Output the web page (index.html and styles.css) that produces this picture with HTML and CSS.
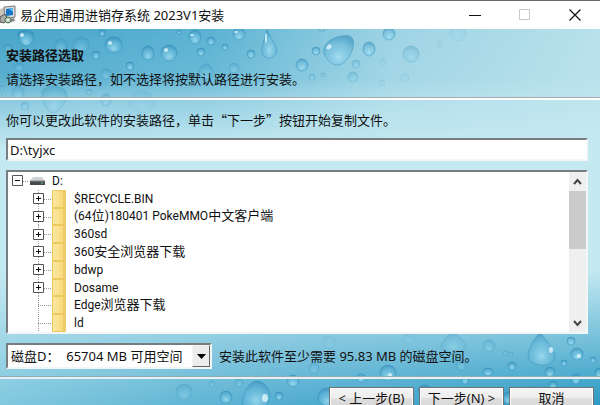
FILE: index.html
```
<!DOCTYPE html>
<html lang="zh-CN">
<head>
    <meta charset="UTF-8">
    <meta name="viewport" content="width=device-width, initial-scale=1.0">
    <title>易企用通用进销存系统 2023V1安装</title>
    <link rel="stylesheet" href="styles.css">
</head>
<body>
    <div class="window">
        <header class="titlebar">
            <svg class="app-icon" width="17" height="20" viewBox="0 0 17 20">
                <path d="M0 4l4-1v11l-4 2z" fill="#c9c5bb"/>
                <path d="M4 2l11-1v11l-10 2z" fill="#d8dde0" stroke="#777" stroke-width="1"/>
                <path d="M6 4l7-1v7l-7 1z" fill="#1677c8"/>
                <path d="M9 4l4-1v4z" fill="#5fb9ee"/>
                <path d="M5 15l9-2 1 3-8 2z" fill="#85888b"/>
                <path d="M0 12l5-3 3 5-4 4-4-1z" fill="#a9aaa3" stroke="#555" stroke-width="1"/>
                <circle cx="8" cy="15" r="3" fill="#b8ccb5" stroke="#497357"/>
                <circle cx="8" cy="15" r="1" fill="#fff"/>
            </svg>
            <h1>易企用通用进销存系统 2023V1安装</h1>
            <div class="window-buttons">
                <button type="button" aria-label="最小化"><svg width="12" height="12" viewBox="0 0 12 12"><path d="M0 6.5h12" stroke="#111"/></svg></button>
                <button type="button" aria-label="最大化" disabled><svg width="12" height="12" viewBox="0 0 12 12"><path d="M.5 .5h10v10h-10z" fill="none" stroke="#c8c8c8"/></svg></button>
                <button type="button" aria-label="关闭"><svg width="12" height="12" viewBox="0 0 12 12"><path d="M.5 .5l11 11M11.5 .5l-11 11" stroke="#111" stroke-width="1.2"/></svg></button>
            </div>
        </header>

        <main class="wizard">
            <!-- water drops, upper left -->
            <svg class="drops drops-top" width="600" height="100" viewBox="0 0 600 100" aria-hidden="true">
                <defs>
                    <radialGradient id="drop" cx=".5" cy=".72" r=".7">
                        <stop offset="0" stop-color="#a9e3f5" stop-opacity=".75"/>
                        <stop offset=".6" stop-color="#68b9dc" stop-opacity=".5"/>
                        <stop offset="1" stop-color="#2583b4" stop-opacity=".5"/>
                    </radialGradient>
                </defs>
                <g class="drop">
                    <path d="M18 4c3-4 15-3 16 2 0 5-4 11-8 11s-9-9-8-13z"/>
                    <path d="M106 12c4-6 15-5 16 2 1 6-5 11-10 9-5-1-9-7-6-11z"/>
                    <ellipse cx="102" cy="4" rx="3" ry="3"/>
                    <ellipse cx="148" cy="24" rx="6" ry="7"/>
                    <ellipse cx="169" cy="24" rx="8" ry="8"/>
                    <ellipse cx="195" cy="8" rx="6" ry="7"/>
                    <ellipse cx="211" cy="12" rx="4" ry="4"/>
                    <ellipse cx="179" cy="3" rx="2" ry="2"/>
                    <ellipse cx="201" cy="23" rx="4" ry="4"/>
                    <ellipse cx="225" cy="18" rx="3" ry="3"/>
                    <ellipse cx="239" cy="5" rx="6" ry="6"/>
                    <path d="M267 1c2 5 9 15 10 20 0 4-4 8-8 8-5 0-8-4-7-9 1-6 3-14 5-19z"/>
                    <ellipse cx="251" cy="25" rx="4" ry="4"/>
                    <path d="M325 17c4-8 20-13 26-9 5 4 2 15-3 21-5 8-13 9-18 4-4-4-9-10-5-16z"/>
                    <ellipse cx="316" cy="22" rx="4" ry="4"/>
                    <ellipse cx="322" cy="0" rx="3" ry="2"/>
                    <ellipse cx="302" cy="36" rx="6" ry="6"/>
                    <ellipse cx="96" cy="26" rx="4" ry="4"/>
                    <ellipse cx="130" cy="37" rx="4" ry="4"/>
                    <ellipse cx="389" cy="5" rx="6" ry="6"/>
                    <ellipse cx="369" cy="20" rx="6" ry="7"/>
                </g>
                <g class="drop soft">
                    <ellipse cx="61" cy="17" rx="6" ry="7"/>
                    <ellipse cx="81" cy="16" rx="8" ry="8"/>
                    <ellipse cx="8" cy="19" rx="4" ry="4"/>
                    <ellipse cx="19" cy="38" rx="5" ry="4"/>
                    <ellipse cx="43" cy="32" rx="3" ry="3"/>
                    <ellipse cx="18" cy="64" rx="6" ry="7"/>
                    <ellipse cx="2" cy="59" rx="2" ry="3"/>
                    <path d="M42 62c5-8 22-6 25 2 1 7-8 20-14 20s-14-16-11-22z"/>
                    <ellipse cx="89" cy="63" rx="3" ry="3"/>
                    <ellipse cx="106" cy="45" rx="5" ry="5"/>
                    <ellipse cx="106" cy="71" rx="5" ry="6"/>
                    <ellipse cx="25" cy="77" rx="4" ry="4"/>
                    <ellipse cx="206" cy="43" rx="7" ry="8"/>
                    <ellipse cx="234" cy="39" rx="5" ry="5"/>
                    <ellipse cx="411" cy="25" rx="8" ry="8"/>
                    <ellipse cx="356" cy="35" rx="4" ry="4"/>
                    <ellipse cx="323" cy="46" rx="2" ry="2"/>
                    <ellipse cx="312" cy="48" rx="3" ry="3"/>
                    <ellipse cx="353" cy="48" rx="5" ry="5"/>
                </g>
                <g class="drop faint">
                    <ellipse cx="142" cy="73" rx="13" ry="11"/>
                    <ellipse cx="458" cy="4" rx="8" ry="8"/>
                    <ellipse cx="440" cy="15" rx="3" ry="3"/>
                    <ellipse cx="383" cy="33" rx="3" ry="3"/>
                    <ellipse cx="405" cy="49" rx="4" ry="4"/>
                    <ellipse cx="382" cy="54" rx="3" ry="3"/>
                </g>
                <g class="shine">
                    <ellipse cx="22" cy="6" rx="2" ry="2"/>
                    <ellipse cx="110" cy="14" rx="2" ry="2"/>
                    <ellipse cx="166" cy="21" rx="2" ry="2"/>
                    <ellipse cx="192" cy="6" rx="2" ry="1"/>
                    <ellipse cx="236" cy="3" rx="2" ry="1"/>
                    <ellipse cx="266" cy="9" rx="1" ry="5"/>
                    <ellipse cx="329" cy="18" rx="2" ry="3" transform="rotate(40 329 18)"/>
                </g>
            </svg>
            <!-- water drops, lower right -->
            <svg class="drops drops-bottom" width="430" height="75" viewBox="170 330 430 75" aria-hidden="true">
                <g class="drop">
                    <path d="M242 403c1-10 7-22 15-22 7 0 13 8 13 15 0 5-3 9-7 12h-20z"/>
                    <ellipse cx="226" cy="397" rx="6" ry="6"/>
                    <ellipse cx="279" cy="396" rx="4" ry="4"/>
                    <ellipse cx="293" cy="381" rx="6" ry="6"/>
                    <ellipse cx="328" cy="397" rx="10" ry="9"/>
                    <ellipse cx="388" cy="373" rx="8" ry="8"/>
                    <ellipse cx="361" cy="378" rx="5" ry="4"/>
                    <ellipse cx="425" cy="391" rx="7" ry="6"/>
                    <ellipse cx="465" cy="380" rx="4" ry="4"/>
                    <path d="M540 333c4 3 15 19 15 24 0 11-26 11-27-1 0-6 6-19 12-23z"/>
                    <ellipse cx="577" cy="354" rx="6" ry="6"/>
                    <ellipse cx="571" cy="341" rx="4" ry="4"/>
                    <ellipse cx="593" cy="360" rx="3" ry="3"/>
                    <ellipse cx="564" cy="363" rx="3" ry="3"/>
                    <ellipse cx="550" cy="372" rx="5" ry="5"/>
                    <ellipse cx="512" cy="366" rx="4" ry="4"/>
                    <ellipse cx="488" cy="372" rx="5" ry="4"/>
                    <ellipse cx="576" cy="379" rx="5" ry="5"/>
                    <ellipse cx="599" cy="373" rx="4" ry="5"/>
                    <ellipse cx="553" cy="385" rx="4" ry="4"/>
                    <ellipse cx="508" cy="398" rx="5" ry="6"/>
                </g>
                <g class="drop soft">
                    <ellipse cx="184" cy="392" rx="8" ry="8"/>
                    <ellipse cx="239" cy="383" rx="4" ry="4"/>
                    <ellipse cx="212" cy="384" rx="3" ry="3"/>
                    <ellipse cx="489" cy="346" rx="6" ry="6"/>
                    <ellipse cx="505" cy="353" rx="2" ry="2"/>
                    <ellipse cx="511" cy="354" rx="2" ry="2"/>
                    <ellipse cx="461" cy="365" rx="5" ry="5"/>
                    <ellipse cx="314" cy="368" rx="5" ry="5"/>
                    <path d="M453 333c6 2 13 10 13 14 0 8-25 7-25 0 0-4 6-12 12-14z"/>
                </g>
                <g class="drop faint">
                    <ellipse cx="409" cy="339" rx="7" ry="5"/>
                    <ellipse cx="329" cy="342" rx="7" ry="6"/>
                    <ellipse cx="272" cy="371" rx="3" ry="3"/>
                </g>
                <g class="shine">
                    <ellipse cx="265" cy="398" rx="3" ry="4"/>
                    <ellipse cx="551" cy="350" rx="2" ry="3"/>
                    <ellipse cx="579" cy="356" rx="2" ry="2"/>
                    <ellipse cx="390" cy="375" rx="2" ry="2"/>
                </g>
            </svg>

            <section class="intro">
                <h2>安装路径选取</h2>
                <p>请选择安装路径，如不选择将按默认路径进行安装。</p>
            </section>

            <section class="content">
                <label for="path">你可以更改此软件的安装路径，单击“下一步”按钮开始复制文件。</label>
                <input class="sunken" type="text" id="path" value="D:\tyjxc">

                <div class="tree sunken">
                    <ul>
                        <li class="root">
                            <button type="button" class="toggle" aria-label="折叠 D:"><svg width="11" height="11" viewBox="0 0 11 11"><path d="M.5 .5h10v10h-10z" fill="#fff" stroke="#555"/><path d="M3 5.5h5" stroke="#111"/></svg></button>
                            <svg class="drive" width="15" height="10" viewBox="0 0 15 10"><path d="M3 1h9l3 4H0z" fill="#cfd1d2"/><path d="M0 5h15v4H0z" fill="#484b4d"/><path d="M0 5h15" stroke="#888"/><path d="M11 7h2" stroke="#55d68a"/></svg>
                            <span>D:</span>
                        </li>
                        <li>
                            <button type="button" class="toggle" aria-label="展开"><svg width="11" height="11" viewBox="0 0 11 11"><path d="M.5 .5h10v10h-10z" fill="#fff" stroke="#555"/><path d="M3 5.5h5M5.5 3v5" stroke="#111"/></svg></button>
                            <i class="folder"></i>
                            <span>$RECYCLE.BIN</span>
                        </li>
                        <li>
                            <button type="button" class="toggle" aria-label="展开"><svg width="11" height="11" viewBox="0 0 11 11"><path d="M.5 .5h10v10h-10z" fill="#fff" stroke="#555"/><path d="M3 5.5h5M5.5 3v5" stroke="#111"/></svg></button>
                            <i class="folder"></i>
                            <span>(64<b>位</b>)180401 PokeMMO<b>中文客户端</b></span>
                        </li>
                        <li>
                            <button type="button" class="toggle" aria-label="展开"><svg width="11" height="11" viewBox="0 0 11 11"><path d="M.5 .5h10v10h-10z" fill="#fff" stroke="#555"/><path d="M3 5.5h5M5.5 3v5" stroke="#111"/></svg></button>
                            <i class="folder"></i>
                            <span>360sd</span>
                        </li>
                        <li>
                            <button type="button" class="toggle" aria-label="展开"><svg width="11" height="11" viewBox="0 0 11 11"><path d="M.5 .5h10v10h-10z" fill="#fff" stroke="#555"/><path d="M3 5.5h5M5.5 3v5" stroke="#111"/></svg></button>
                            <i class="folder"></i>
                            <span>360<b>安全浏览器下载</b></span>
                        </li>
                        <li>
                            <button type="button" class="toggle" aria-label="展开"><svg width="11" height="11" viewBox="0 0 11 11"><path d="M.5 .5h10v10h-10z" fill="#fff" stroke="#555"/><path d="M3 5.5h5M5.5 3v5" stroke="#111"/></svg></button>
                            <i class="folder"></i>
                            <span>bdwp</span>
                        </li>
                        <li>
                            <button type="button" class="toggle" aria-label="展开"><svg width="11" height="11" viewBox="0 0 11 11"><path d="M.5 .5h10v10h-10z" fill="#fff" stroke="#555"/><path d="M3 5.5h5M5.5 3v5" stroke="#111"/></svg></button>
                            <i class="folder"></i>
                            <span>Dosame</span>
                        </li>
                        <li class="leaf">
                            <i class="folder"></i>
                            <span>Edge<b>浏览器下载</b></span>
                        </li>
                        <li class="leaf">
                            <i class="folder"></i>
                            <span>ld</span>
                        </li>
                    </ul>
                    <div class="scrollbar">
                        <button type="button" aria-label="向上滚动"><svg width="9" height="8" viewBox="0 0 9 8"><path d="M1 6l3.500-4L8 6" fill="none" stroke="#444" stroke-width="2"/></svg></button>
                        <div class="thumb"></div>
                        <button type="button" aria-label="向下滚动"><svg width="9" height="8" viewBox="0 0 9 8"><path d="M1 2l3.500 4L8 2" fill="none" stroke="#444" stroke-width="2"/></svg></button>
                    </div>
                </div>

                <div class="disk-row">
                    <div class="combo sunken">
                        <select aria-label="磁盘">
                            <option>磁盘D：&nbsp; 65704 MB 可用空间</option>
                        </select>
                        <span class="arrow"><svg width="9" height="5" viewBox="0 0 9 5"><path d="M0 0h9L4.500 5z" fill="#000"/></svg></span>
                    </div>
                    <p>安装此软件至少需要 95.83 MB 的磁盘空间。</p>
                </div>
            </section>

            <footer class="actions">
                <button type="button">&lt; 上一步(B)</button>
                <button type="button">下一步(N) &gt;</button>
                <button type="button">取消</button>
            </footer>
        </main>
    </div>
</body>
</html>
```

FILE: styles.css
```
* {
    box-sizing: border-box;
}
body {
    margin: 0;
    height: 100vh;
    overflow: hidden;
    font-family: "Noto Sans", "Noto Sans CJK SC", sans-serif;
    font-size: 13px;
    line-height: 20px;
    color: #111;
}
h1, h2, p, ul {
    margin: 0;
    padding: 0;
    font-size: 13px;
}
button, input, select {
    font: inherit;
    color: inherit;
}
.window {
    border-top: 1px solid #6e696b;
}

/* title bar */
.titlebar {
    display: flex;
    align-items: center;
    height: 28px;
    background: #fff;
}
.app-icon {
    margin-right: 3px;
}
.titlebar h1 {
    flex: 1;
    font-weight: normal;
}
.window-buttons {
    display: flex;
}
.window-buttons button {
    display: flex;
    align-items: center;
    justify-content: center;
    width: 50px;
    height: 28px;
    padding: 0;
    border: none;
    background: none;
}

/* wizard page */
.wizard {
    position: relative;
    z-index: 0;
    background:
        linear-gradient(to bottom, rgba(197, 233, 241, 0) 0, rgba(197, 233, 241, 0.15) 50px, rgba(197, 233, 241, 0.55) 72px, #c5e9f1 120px, #c5e9f1 240px, rgba(197, 233, 241, 0) 380px),
        linear-gradient(to right, #48a5ca 0, #5bb2d2 35%, #9dd3e4 65%, #b8e1eb 100%) top / 100% 200px no-repeat,
        linear-gradient(to right, #7fc7de 0, #4ca9ce 50%, #2797c2 100%);
}
.drops {
    position: absolute;
    z-index: -1;
}
.drops-top {
    top: 0;
    left: 0;
}
.drops-bottom {
    top: 301px;
    right: 0;
}
.drop {
    fill: url(#drop);
    stroke: #2380b0;
    stroke-opacity: 0.35;
}
.soft {
    opacity: 0.5;
}
.faint {
    opacity: 0.2;
}
.shine {
    fill: #e2f7fd;
    opacity: 0.8;
}
.intro {
    padding: 16px 6px 9px;
    border-bottom: 2px solid #fff;
    box-shadow: inset 0 -1px #a3a9ac;
}
.intro p {
    padding-top: 4px;
}
.content {
    padding: 10px 12px 8px 6px;
}
.content label {
    display: block;
    font-family: "Noto Sans CJK SC", sans-serif;
}
.sunken {
    border: 2px solid;
    border-color: #777c7f #f3f6f7 #f3f6f7 #777c7f;
    background: #fff;
}
#path {
    display: block;
    width: 100%;
    height: 23px;
    margin: 8px 0 9px;
    padding: 0 2px;
    outline: none;
}

/* folder tree */
.tree {
    display: flex;
    height: 164px;
}
.tree ul {
    flex: 1;
    display: grid;
    grid-auto-rows: 1fr;
    list-style: none;
    font-family: Roboto, "Noto Sans CJK SC", sans-serif;
    font-size: 12px;
    line-height: 16px;
}
.tree li {
    display: flex;
    align-items: center;
    padding-left: 25px;
    background:
        repeating-linear-gradient(to bottom, #999 0 1px, transparent 1px 2px) 30px 0 / 1px 100% no-repeat,
        repeating-linear-gradient(to right, #999 0 1px, transparent 1px 2px) 30px 9px / 14px 1px no-repeat;
}
.tree .root {
    padding-left: 4px;
    background: repeating-linear-gradient(to right, #999 0 1px, transparent 1px 2px) 9px 9px / 12px 1px no-repeat;
}
.tree .leaf {
    padding-left: 44px;
}
.tree b {
    font-size: 13px;
    font-weight: normal;
}
.toggle {
    display: flex;
    margin-right: 8px;
    padding: 0;
    border: none;
    background: none;
}
.root .toggle {
    margin-right: 7px;
}
.drive {
    margin-right: 7px;
}
.folder {
    align-self: stretch;
    width: 14px;
    margin-right: 8px;
    border: 1px solid #ecc860;
    border-right: 3px solid #edcb66;
    border-radius: 1px;
    background: linear-gradient(to right, #fbe79f, #f8da7c);
}
.scrollbar {
    display: flex;
    flex-direction: column;
    width: 17px;
    background: #efefef;
}
.scrollbar button {
    display: flex;
    align-items: center;
    justify-content: center;
    height: 19px;
    padding: 0;
    border: none;
    background: none;
}
.thumb {
    height: 58px;
    margin-bottom: auto;
    background: #cbcbcb;
}

/* free space */
.disk-row {
    display: flex;
    align-items: center;
    gap: 7px;
    margin-top: 9px;
}
.combo {
    position: relative;
    width: 206px;
    height: 26px;
}
.combo select {
    display: block;
    width: 100%;
    height: 22px;
    padding: 0 18px 0 3px;
    border: none;
    outline: none;
    background: none;
    appearance: none;
}
.arrow {
    position: absolute;
    top: 0;
    right: 0;
    bottom: 0;
    display: flex;
    align-items: center;
    justify-content: center;
    width: 18px;
    border: 1px solid;
    border-color: #f4f4f4 #666 #666 #f4f4f4;
    background: #ececec;
    pointer-events: none;
}

/* footer */
.actions {
    display: flex;
    justify-content: flex-end;
    gap: 5px;
    padding: 8px 6px 12px;
    border-top: 2px solid #e6f1f4;
    box-shadow: 0 -1px #92aab3;
}
.actions button {
    width: 85px;
    height: 22px;
    padding: 0;
    border: 1px solid #6f7375;
    box-shadow: inset 0 0 0 1px #fbfbfb;
    background: linear-gradient(to bottom, #f4f4f4 0, #ededed 50%, #dfdfdf 50%, #d6d6d6 100%);
}
```
